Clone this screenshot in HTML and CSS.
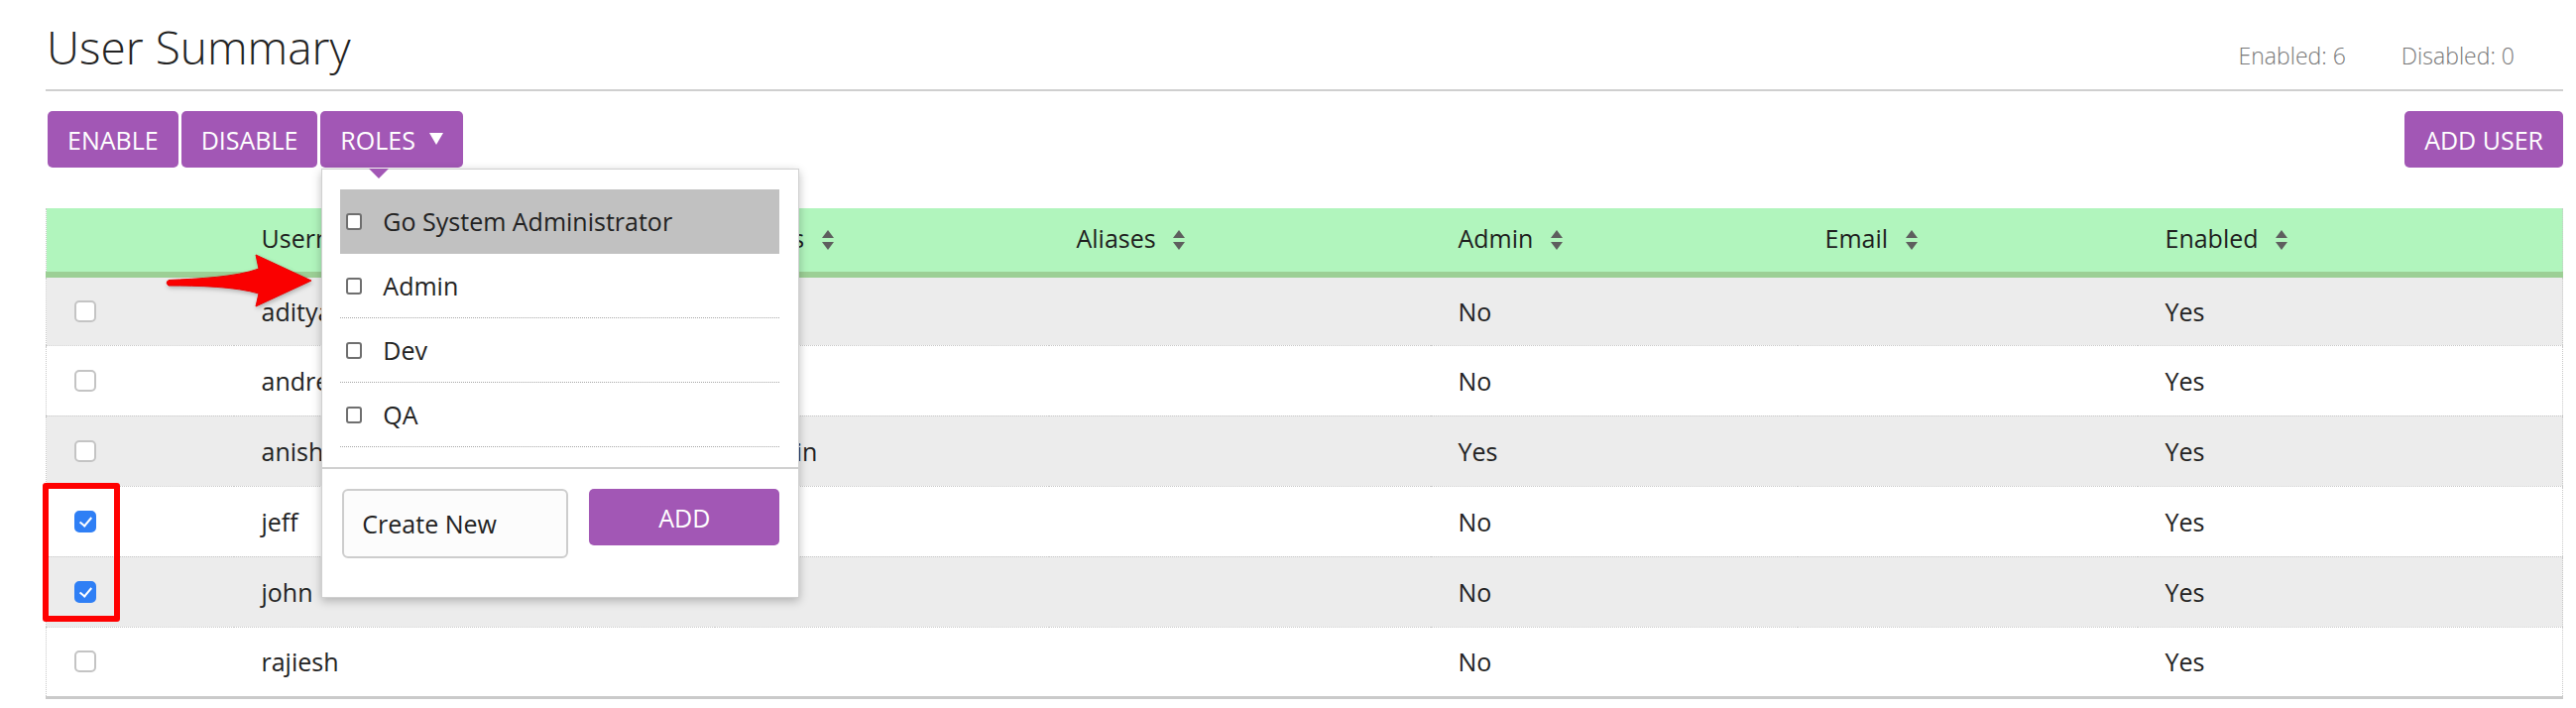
FILE: index.html
```html
<!DOCTYPE html>
<html lang="en">
<head>
<meta charset="utf-8">
<title>User Summary</title>
<link rel="stylesheet" href="styles.css">
</head>
<body>
<div class="page">
  <header class="page-head">
    <h1 class="title">User Summary</h1>
    <div class="stats">
      <span>Enabled: 6</span>
      <span>Disabled: 0</span>
    </div>
  </header>

  <div class="toolbar">
    <div class="btn-group">
      <button class="btn">Enable</button>
      <button class="btn">Disable</button>
      <div class="roles">
        <button class="btn btn-roles">Roles <span class="caret"></span></button>
        <div class="dropdown">
          <ul class="role-list">
            <li class="role-item active"><span class="mini-check"></span>Go System Administrator</li>
            <li class="role-item"><span class="mini-check"></span>Admin</li>
            <li class="role-item"><span class="mini-check"></span>Dev</li>
            <li class="role-item"><span class="mini-check"></span>QA</li>
          </ul>
          <div class="dropdown-foot">
            <input class="new-role" type="text" value="Create New">
            <button class="btn btn-add">Add</button>
          </div>
        </div>
      </div>
    </div>
    <button class="btn">Add User</button>
  </div>

  <div class="table-wrap">
    <svg class="arrow" width="160" height="66" viewBox="0 0 160 66">
      <path d="M10,32.5 C40,31 78,29.5 101,21 L98,7 L154,33 L98,59 L101,46 C78,39 40,38 10,38 Q6.5,35.2 10,32.5 Z" fill="#fa0000" stroke="#e80000" stroke-width="1"/>
    </svg>
    <div class="select-box"></div>
    <table class="users">
      <colgroup>
        <col class="c-check">
        <col class="c-user">
        <col class="c-roles">
        <col class="c-alias">
        <col class="c-admin">
        <col class="c-email">
        <col class="c-enabled">
      </colgroup>
      <thead>
        <tr>
          <th></th>
          <th>Username <svg class="sort" viewBox="0 0 12 20"><path d="M0,8 L6,0 L12,8 Z M0,12 L12,12 L6,20 Z"/></svg></th>
          <th>Roles <svg class="sort" viewBox="0 0 12 20"><path d="M0,8 L6,0 L12,8 Z M0,12 L12,12 L6,20 Z"/></svg></th>
          <th>Aliases <svg class="sort" viewBox="0 0 12 20"><path d="M0,8 L6,0 L12,8 Z M0,12 L12,12 L6,20 Z"/></svg></th>
          <th>Admin <svg class="sort" viewBox="0 0 12 20"><path d="M0,8 L6,0 L12,8 Z M0,12 L12,12 L6,20 Z"/></svg></th>
          <th>Email <svg class="sort" viewBox="0 0 12 20"><path d="M0,8 L6,0 L12,8 Z M0,12 L12,12 L6,20 Z"/></svg></th>
          <th>Enabled <svg class="sort" viewBox="0 0 12 20"><path d="M0,8 L6,0 L12,8 Z M0,12 L12,12 L6,20 Z"/></svg></th>
        </tr>
      </thead>
      <tbody>
        <tr><td><span class="check"></span></td><td>aditya</td><td></td><td></td><td>No</td><td></td><td>Yes</td></tr>
        <tr><td><span class="check"></span></td><td>andrew</td><td></td><td></td><td>No</td><td></td><td>Yes</td></tr>
        <tr><td><span class="check"></span></td><td>anish</td><td>Admin</td><td></td><td>Yes</td><td></td><td>Yes</td></tr>
        <tr><td><span class="check checked"></span></td><td>jeff</td><td></td><td></td><td>No</td><td></td><td>Yes</td></tr>
        <tr><td><span class="check checked"></span></td><td>john</td><td></td><td></td><td>No</td><td></td><td>Yes</td></tr>
        <tr><td><span class="check"></span></td><td>rajiesh</td><td></td><td></td><td>No</td><td></td><td>Yes</td></tr>
      </tbody>
    </table>
  </div>
</div>
</body>
</html>
```

FILE: styles.css
```css
* { box-sizing: border-box; }

html, body {
  margin: 0;
  background: #fff;
}

body {
  font-family: "Open Sans", "Noto Sans", "Liberation Sans", sans-serif;
  color: #222;
  font-size: 25px;
}

.page {
  padding: 0 13px 0 46px;
}

/* ---------- header ---------- */
.page-head {
  display: flex;
  align-items: baseline;
  justify-content: space-between;
  padding-top: 16px;
  padding-bottom: 12px;
  border-bottom: 2px solid #cfcfcf;
}

.title {
  margin: 0 0 0 1px;
  font-size: 46px;
  font-weight: 300;
  line-height: 62px;
  color: #222;
}

.stats {
  display: flex;
  gap: 56px;
  margin-right: 49px;
  font-size: 23px;
  font-weight: 300;
  color: #777;
}

/* ---------- toolbar ---------- */
.toolbar {
  display: flex;
  justify-content: space-between;
  align-items: flex-start;
  margin-top: 20px;
  padding-left: 2px;
}

.btn-group {
  display: flex;
  gap: 3px;
}

.btn {
  height: 57px;
  padding: 0 20px;
  border: none;
  border-radius: 5px;
  background: #a257b5;
  color: #fff;
  font-family: inherit;
  font-size: 25px;
  font-weight: 400;
  text-transform: uppercase;
  display: inline-flex;
  align-items: center;
  justify-content: center;
}

.btn-roles {
  gap: 14px;
}

.caret {
  width: 0;
  height: 0;
  border-left: 7px solid transparent;
  border-right: 7px solid transparent;
  border-top: 12px solid #fff;
  margin-bottom: 2px;
}

.roles {
  position: relative;
}

/* ---------- dropdown ---------- */
.dropdown {
  position: absolute;
  z-index: 10;
  left: 1px;
  top: calc(100% + 1px);
  width: 482px;
  background: #fff;
  border: 1px solid #d0d0d0;
  box-shadow: 0 3px 9px rgba(0, 0, 0, 0.25);
}

.dropdown::before {
  content: "";
  position: absolute;
  left: 47px;
  top: -1px;
  border-left: 10px solid transparent;
  border-right: 10px solid transparent;
  border-top: 10px solid #a257b5;
}

.role-list {
  list-style: none;
  margin: 0;
  padding: 20px 19px 20px 18px;
  border-bottom: 2px solid #d0d0d0;
}

.role-item {
  display: flex;
  align-items: center;
  gap: 21px;
  height: 65px;
  padding-left: 6px;
  border-bottom: 1px dotted #a8a8a8;
  font-size: 25px;
  color: #222;
}

.role-item.active {
  background: #c1c1c1;
  border-bottom-color: #c1c1c1;
}

.mini-check {
  width: 16px;
  height: 17px;
  border: 2px solid #6f6f6f;
  border-radius: 3px;
  background: #fff;
  flex: none;
}

.dropdown-foot {
  display: flex;
  align-items: flex-start;
  gap: 21px;
  padding: 20px 19px 39px 20px;
}

.new-role {
  width: 228px;
  height: 70px;
  padding: 0 18px;
  border: 2px solid #cdcdcd;
  border-radius: 6px;
  background: #fcfcfc;
  font-family: inherit;
  font-size: 25px;
  color: #222;
}

.btn-add {
  width: 192px;
}

/* ---------- table ---------- */
.table-wrap {
  position: relative;
  margin-top: 41px;
}

.arrow {
  position: absolute;
  z-index: 5;
  left: 114px;
  top: 40px;
  filter: drop-shadow(1px 2px 2px rgba(0, 0, 0, 0.25));
}

.select-box {
  position: absolute;
  z-index: 5;
  left: -3px;
  top: 277px;
  width: 78px;
  height: 140px;
  border: 6px solid #ff0000;
  border-radius: 3px;
}

.users {
  width: 100%;
  table-layout: fixed;
  border-collapse: collapse;
  border-left: 1px dotted #c8c8c8;
  border-right: 1px dotted #c8c8c8;
  border-bottom: 3px solid #cacaca;
}

.c-check { width: 189px; }
.c-user { width: 485px; }
.c-roles { width: 337px; }
.c-alias { width: 385px; }
.c-admin { width: 370px; }
.c-email { width: 343px; }

.users th {
  height: 67px;
  padding: 0 0 4px 28px;
  background: #b1f5bd;
  border-bottom: 6px solid #9ccf95;
  text-align: left;
  font-weight: 400;
  font-size: 25px;
  color: #1e1e1e;
  white-space: nowrap;
}

.sort {
  width: 12px;
  height: 20px;
  margin-left: 11px;
  vertical-align: -2px;
  fill: #5e5e5e;
}

.users td {
  height: 71px;
  padding: 0 0 0 28px;
  border-bottom: 1px dotted #c8c8c8;
  font-size: 25px;
  color: #222;
  vertical-align: middle;
}

.users tbody tr:nth-child(odd) td {
  background: #ececec;
}

.users tbody tr:last-child td {
  border-bottom: none;
}

.check {
  display: block;
  width: 22px;
  height: 22px;
  border: 2px solid #c4c4c4;
  border-radius: 5px;
  background: #fff;
  position: relative;
}

.check.checked {
  background: #2f7ff5;
  border-color: #2f7ff5;
}

.check.checked::after {
  content: "";
  position: absolute;
  left: 6px;
  top: 2px;
  width: 5px;
  height: 10px;
  border-right: 2.5px solid #fff;
  border-bottom: 2.5px solid #fff;
  transform: rotate(40deg);
}
```
